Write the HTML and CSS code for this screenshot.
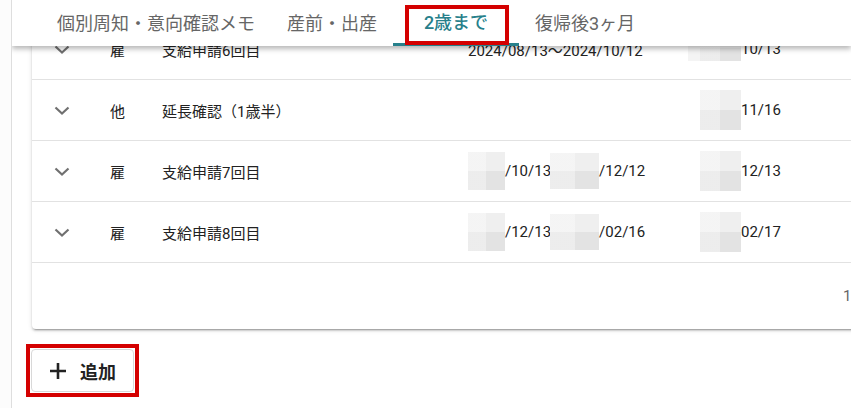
FILE: index.html
```html
<!DOCTYPE html>
<html lang="ja">
<head>
  <meta charset="UTF-8">
  <title>育休スケジュール</title>
  <link rel="stylesheet" href="styles.css">
</head>
<body>
  <div class="rail"></div>
  <div class="main">
    <div class="tabs">
      <div class="tab">個別周知・意向確認メモ</div>
      <div class="tab">産前・出産</div>
      <div class="tab active">2歳まで<span class="mark"></span></div>
      <div class="tab">復帰後3ヶ月</div>
    </div>

    <div class="content">
      <div class="card">
        <div class="row">
          <div class="cell toggle"><svg width="16" height="9" viewBox="0 0 16 9"><polyline points="1.5,1.5 8,7.5 14.5,1.5" /></svg></div>
          <div class="cell">雇</div>
          <div class="cell">支給申請6回目</div>
          <div class="cell">2024/08/13～2024/10/12</div>
          <div class="cell"><span class="blur wide shift"></span>10/13</div>
        </div>
        <div class="row">
          <div class="cell toggle"><svg width="16" height="9" viewBox="0 0 16 9"><polyline points="1.5,1.5 8,7.5 14.5,1.5" /></svg></div>
          <div class="cell">他</div>
          <div class="cell">延長確認（1歳半）</div>
          <div class="cell"></div>
          <div class="cell"><span class="blur tall"></span>11/16</div>
        </div>
        <div class="row">
          <div class="cell toggle"><svg width="16" height="9" viewBox="0 0 16 9"><polyline points="1.5,1.5 8,7.5 14.5,1.5" /></svg></div>
          <div class="cell">雇</div>
          <div class="cell">支給申請7回目</div>
          <div class="cell"><span class="blur year"></span>/10/13<span class="blur range"></span>/12/12</div>
          <div class="cell"><span class="blur"></span>12/13</div>
        </div>
        <div class="row">
          <div class="cell toggle"><svg width="16" height="9" viewBox="0 0 16 9"><polyline points="1.5,1.5 8,7.5 14.5,1.5" /></svg></div>
          <div class="cell">雇</div>
          <div class="cell">支給申請8回目</div>
          <div class="cell"><span class="blur year"></span>/12/13<span class="blur range"></span>/02/16</div>
          <div class="cell"><span class="blur"></span>02/17</div>
        </div>
        <div class="footer">1-4 / 4</div>
      </div>

      <span class="highlight">
        <button class="add">
          <svg width="18" height="18" viewBox="0 0 18 18"><path d="M9 1v16M1 9h16" /></svg>
          追加
        </button>
      </span>
    </div>
  </div>
</body>
</html>
```

FILE: styles.css
```css
body { margin: 0; display: flex; height: 408px; overflow: hidden; background: #fff; font-family: Roboto, "Noto Sans CJK JP", sans-serif; color: #222; }
.rail { width: 11px; flex: none; border-right: 1px solid #dedede; background: #fcfcfc; }
.main { flex: 1; min-width: 0; overflow: hidden; }

.tabs { position: relative; z-index: 2; display: flex; height: 46px; padding-left: 29px; background: #fff; box-shadow: 0 3px 5px rgba(0,0,0,0.28); }
.tab { position: relative; padding: 2px 16px 0; line-height: 44px; font-size: 18px; color: #666; white-space: nowrap; }
.tab.active { min-width: 126px; box-sizing: border-box; text-align: center; color: #27808b; font-weight: 500; border-bottom: 3px solid #27808b; line-height: 41px; }
.mark { position: absolute; left: 12px; right: 10px; top: 5px; bottom: -2px; border: 4px solid #d40000; }

.content { padding-left: 20px; }
.card { width: 1000px; margin-top: -27px; background: #fff; border-radius: 4px; box-shadow: 0 3px 1px -2px rgba(0,0,0,0.2), 0 2px 2px 0 rgba(0,0,0,0.14), 0 1px 5px 0 rgba(0,0,0,0.12); }
.row { display: grid; grid-template-columns: 78px 52px 306px 232px 1fr; align-items: center; height: 60px; border-bottom: 1px solid #e2e2e2; font-size: 15px; }
.cell { display: flex; align-items: center; white-space: nowrap; }
.toggle { padding-left: 22px; }
.toggle polyline { fill: none; stroke: #707070; stroke-width: 2.2; }

.blur { display: inline-block; width: 41px; height: 40px; background:
  linear-gradient(90deg, rgba(255,255,255,0.35) 50%, rgba(0,0,0,0) 50%),
  linear-gradient(#efefef 50%, #e3e3e3 50%); }
.blur.year { width: 37px; height: 38px; }
.blur.range { width: 49px; height: 36px; margin-left: -1px; }
.blur.tall { height: 40px; }
.blur.wide { width: 41px; height: 26px; box-shadow: -12px 0 0 #f4f4f4; margin-top: -2px; }

.footer { height: 66px; display: flex; align-items: center; padding-left: 811px; font-size: 15px; color: #666; }

.highlight { display: inline-block; margin: 15px 0 0 -6px; padding: 1px; border: 4px solid #d40000; }
.add { display: flex; align-items: center; gap: 13px; width: 103px; height: 43px; padding: 0 0 0 17px; background: #fff; border: 1px solid #d8d8d8; border-radius: 4px; font-family: Roboto, "Noto Sans CJK JP", sans-serif; font-size: 18px; font-weight: bold; color: #222; }
.add path { stroke: #222; stroke-width: 2.6; fill: none; }
```
